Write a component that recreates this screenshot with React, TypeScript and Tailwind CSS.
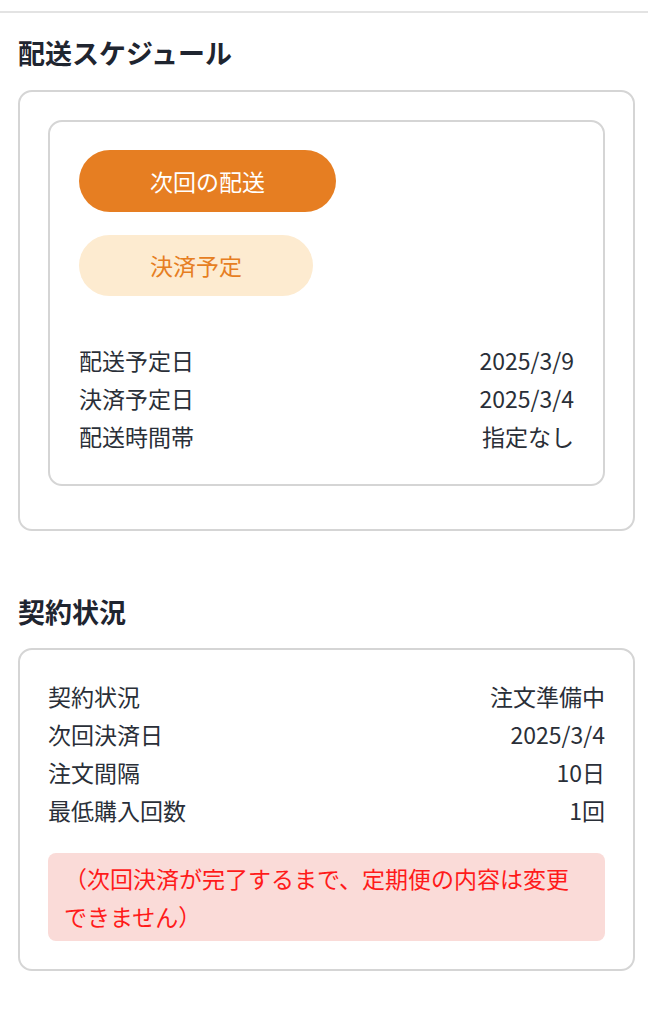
const font = { fontFamily: '"Noto Sans CJK JP", "Noto Sans", sans-serif' };

function Row({ label, value }: { label: string; value: string }) {
  return (
    <div className="flex justify-between text-[23px] leading-[38px] text-[#2a2f38]">
      <span>{label}</span>
      <span>{value}</span>
    </div>
  );
}

export default function App() {
  return (
    <div className="min-h-[1010px] w-[648px] bg-white" style={font}>
      <div className="h-[11px]" />
      <div className="border-t-2 border-[#e3e3e3] pl-[18px] pr-[13px] pb-10">
        {/* ── 配送スケジュール ── */}
        <h2 className="mt-[22px] text-[27px] font-bold leading-[36px] text-[#1f2530]">
          配送スケジュール
        </h2>
        <div className="mt-[19px] rounded-[14px] border-2 border-[#d5d5d5] px-[28px] pt-[28px] pb-[43px]">
          <div className="rounded-[14px] border-2 border-[#d5d5d5] px-[29px] pt-[28px] pb-[29px]">
            <div className="flex flex-col items-start gap-[23px]">
              <span className="rounded-full bg-[#e67e22] px-[71px] text-[23px] leading-[62px] text-white">
                次回の配送
              </span>
              <span className="rounded-full bg-[#fdebd0] px-[71px] text-[23px] leading-[61px] text-[#e67e22]">
                決済予定
              </span>
            </div>
            <div className="mt-[45px]">
              <Row label="配送予定日" value="2025/3/9" />
              <Row label="決済予定日" value="2025/3/4" />
              <Row label="配送時間帯" value="指定なし" />
            </div>
          </div>
        </div>

        {/* ── 契約状況 ── */}
        <h2 className="mt-[63px] text-[27px] font-bold leading-[36px] text-[#1f2530]">契約状況</h2>
        <div className="mt-[18px] rounded-[14px] border-2 border-[#d5d5d5] px-[28px] pt-[27px] pb-[28px]">
          <Row label="契約状況" value="注文準備中" />
          <Row label="次回決済日" value="2025/3/4" />
          <Row label="注文間隔" value="10日" />
          <Row label="最低購入回数" value="1回" />
          <div className="mt-[24px] rounded-[8px] bg-[#fadbd8] px-[16px] py-[6px] text-[23px] leading-[38px] text-[#ff1a1a]">
            （次回決済が完了するまで、定期便の内容は変更できません）
          </div>
        </div>
      </div>
    </div>
  );
}
